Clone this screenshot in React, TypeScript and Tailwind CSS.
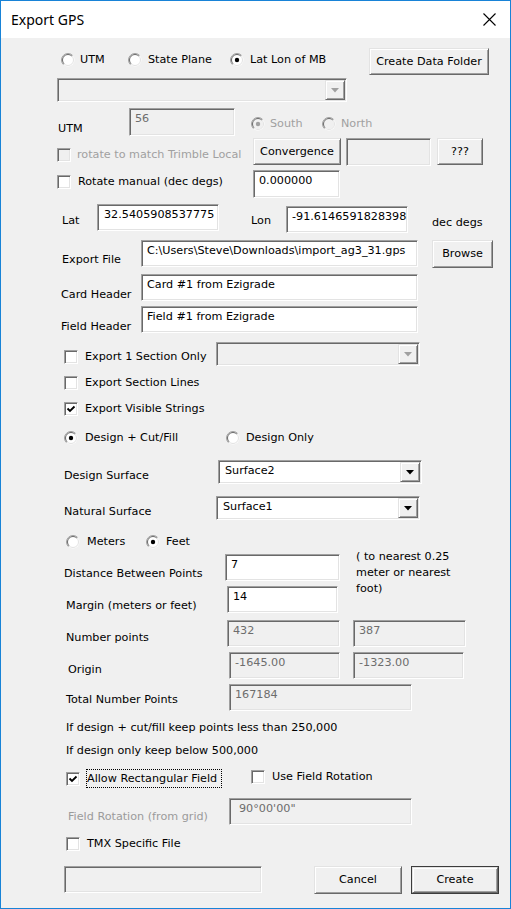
import React from "react";

function Radio({ checked = false, disabled = false }: { checked?: boolean; disabled?: boolean }) {
  return (
    <svg width="14" height="14" viewBox="0 0 14 14" className="shrink-0">
      <circle cx="7" cy="7" r="6.5" fill="#ffffff" />
      <path d="M2.4 11.6 A6.5 6.5 0 0 1 11.6 2.4" stroke="#a0a0a0" strokeWidth="1" fill="none" />
      <circle cx="7" cy="7" r="5" fill={disabled ? "#f0f0f0" : "#ffffff"} />
      <path d="M3.1 10.9 A5.5 5.5 0 0 1 10.9 3.1" stroke="#696969" strokeWidth="1" fill="none" />
      <path d="M3.1 10.9 A5.5 5.5 0 0 0 10.9 3.1" stroke="#e3e3e3" strokeWidth="1" fill="none" />
      {checked && <circle cx="7" cy="7" r="2.2" fill={disabled ? "#a0a0a0" : "#000000"} />}
    </svg>
  );
}

function CheckBox({ checked = false, disabled = false }: { checked?: boolean; disabled?: boolean }) {
  return (
    <div
      className={`w-[14px] h-[14px] shrink-0 border border-t-[#a0a0a0] border-l-[#a0a0a0] border-b-white border-r-white shadow-[inset_1px_1px_0_#696969,inset_-1px_-1px_0_#e3e3e3] flex items-center justify-center ${
        disabled ? "bg-[#f0f0f0]" : "bg-white"
      }`}
    >
      {checked && (
        <svg width="10" height="10" viewBox="0 0 10 10">
          <path d="M1.5 4.5 L4 7 L8.5 2.5" stroke="#000" strokeWidth="1.8" fill="none" />
        </svg>
      )}
    </div>
  );
}

function TextBox({
  className = "",
  value = "",
  disabled = false,
}: {
  className?: string;
  value?: string;
  disabled?: boolean;
}) {
  return (
    <div
      className={`h-[27px] shrink-0 border border-t-[#a0a0a0] border-l-[#a0a0a0] border-b-white border-r-white shadow-[inset_1px_1px_0_#696969,inset_-1px_-1px_0_#e3e3e3] pt-[3px] leading-[14px] whitespace-nowrap overflow-hidden ${
        disabled ? "bg-[#f0f0f0] text-[#6d6d6d]" : "bg-white text-black"
      } ${className}`}
    >
      {value}
    </div>
  );
}

function Btn({ className = "", children }: { className?: string; children: React.ReactNode }) {
  return (
    <div
      className={`h-[27px] shrink-0 bg-[#f0f0f0] border border-t-[#e3e3e3] border-l-[#e3e3e3] border-b-[#696969] border-r-[#696969] shadow-[inset_1px_1px_0_#ffffff,inset_-1px_-1px_0_#a0a0a0] flex items-center justify-center leading-[14px] whitespace-nowrap ${className}`}
    >
      {children}
    </div>
  );
}

function Combo({
  className = "",
  value = "",
  disabled = false,
}: {
  className?: string;
  value?: string;
  disabled?: boolean;
}) {
  return (
    <div
      className={`h-[24px] shrink-0 flex border border-t-[#a0a0a0] border-l-[#a0a0a0] border-b-white border-r-white shadow-[inset_1px_1px_0_#696969,inset_-1px_-1px_0_#e3e3e3] p-[1px] ${
        disabled ? "bg-[#f0f0f0]" : "bg-white"
      } ${className}`}
    >
      <div className="flex-1 pl-[5px] pt-[2px] leading-[14px] whitespace-nowrap overflow-hidden">{value}</div>
      <div className="w-[20px] h-full bg-[#f0f0f0] border border-t-[#e3e3e3] border-l-[#e3e3e3] border-b-[#696969] border-r-[#696969] shadow-[inset_1px_1px_0_#ffffff,inset_-1px_-1px_0_#a0a0a0] flex items-center justify-center">
        <svg width="8" height="5" viewBox="0 0 8 5">
          <path d="M0 0 L8 0 L4 4.5 Z" fill={disabled ? "#a0a0a0" : "#000"} />
        </svg>
      </div>
    </div>
  );
}

export default function App() {
  return (
    <div className="w-[511px] h-[909px] overflow-hidden border border-[#1883d7] bg-[#f0f0f0] text-black font-['DejaVu_Sans',sans-serif] text-[11.2px]">
      {/* Title bar */}
      <div className="h-[37px] bg-white flex items-center justify-between pl-[10px] pr-[14px]">
        <span className="font-['Noto_Sans',sans-serif] text-[14px] leading-[18px] text-black">Export GPS</span>
        <svg width="13" height="13" viewBox="0 0 13 13">
          <path d="M0.5 0.5 L12.5 12.5 M12.5 0.5 L0.5 12.5" stroke="#000" strokeWidth="1.1" />
        </svg>
      </div>

      {/* Row A: coordinate system radios */}
      <div className="flex items-start h-[28px] mt-[10px]">
        <div className="flex items-center w-[67px] h-[14px] mt-[5px] ml-[60px]">
          <Radio />
          <span className="ml-[5px] leading-[14px]">UTM</span>
        </div>
        <div className="flex items-center w-[102px] h-[14px] mt-[5px]">
          <Radio />
          <span className="ml-[6px] leading-[14px]">State Plane</span>
        </div>
        <div className="flex items-center w-[139px] h-[14px] mt-[5px]">
          <Radio checked />
          <span className="ml-[6px] leading-[14px]">Lat Lon of MB</span>
        </div>
        <Btn className="w-[120px]">Create Data Folder</Btn>
      </div>

      {/* Row B: disabled combo */}
      <div className="flex items-start h-[23px] mt-[2px]">
        <Combo className="ml-[56px] w-[290px] h-[23px]" disabled />
      </div>

      {/* Row C: UTM zone */}
      <div className="flex items-start h-[28px] mt-[7px]">
        <span className="ml-[57px] w-[71px] mt-[14px] leading-[14px]">UTM</span>
        <TextBox className="w-[106px] h-[28px] pl-[5px]" value="56" disabled />
        <div className="flex items-center w-[71px] h-[14px] mt-[9px] ml-[16px] text-[#a0a0a0]">
          <Radio checked disabled />
          <span className="ml-[5px] leading-[14px]">South</span>
        </div>
        <div className="flex items-center w-[80px] h-[14px] mt-[9px] text-[#a0a0a0]">
          <Radio disabled />
          <span className="ml-[5px] leading-[14px]">North</span>
        </div>
      </div>

      {/* Row D: rotate trimble */}
      <div className="flex items-start h-[28px] mt-[2px]">
        <div className="flex items-center w-[196px] h-[14px] mt-[10px] ml-[56px] text-[#a0a0a0]">
          <CheckBox disabled />
          <span className="ml-[6px] leading-[14px] whitespace-nowrap">rotate to match Trimble Local</span>
        </div>
        <Btn className="w-[88px]">Convergence</Btn>
        <TextBox className="w-[85px] h-[28px] ml-[5px]" disabled />
        <Btn className="w-[46px] ml-[6px]">???</Btn>
      </div>

      {/* Row E: rotate manual */}
      <div className="flex items-start h-[28px] mt-[4px]">
        <div className="flex items-center w-[196px] h-[14px] mt-[5px] ml-[56px]">
          <CheckBox />
          <span className="ml-[7px] leading-[14px] whitespace-nowrap">Rotate manual (dec degs)</span>
        </div>
        <TextBox className="w-[87px] h-[28px] pl-[5px]" value="0.000000" />
      </div>

      {/* Row F: lat lon */}
      <div className="flex items-start h-[29px] mt-[6px]">
        <span className="ml-[61px] w-[35px] mt-[10px] leading-[14px]">Lat</span>
        <TextBox className="w-[122px] pl-[6px]" value="32.5405908537775" />
        <span className="ml-[32px] w-[35px] mt-[10px] leading-[14px]">Lon</span>
        <TextBox className="w-[122px] mt-[2px] pl-[5px]" value="-91.6146591828398" />
        <span className="ml-[24px] mt-[12px] leading-[14px] whitespace-nowrap">dec degs</span>
      </div>

      {/* Row G: export file */}
      <div className="flex items-start h-[28px] mt-[7px]">
        <span className="ml-[61px] w-[79px] mt-[13px] leading-[14px] whitespace-nowrap">Export File</span>
        <TextBox className="w-[277px] pl-[5px]" value="C:\Users\Steve\Downloads\import_ag3_31.gps" />
        <Btn className="w-[61px] h-[28px] ml-[14px]">Browse</Btn>
      </div>

      {/* Row H: card header */}
      <div className="flex items-start h-[27px] mt-[6px]">
        <span className="ml-[60px] w-[80px] mt-[14px] leading-[14px] whitespace-nowrap">Card Header</span>
        <TextBox className="w-[277px] pl-[5px]" value="Card #1 from Ezigrade" />
      </div>

      {/* Row I: field header */}
      <div className="flex items-start h-[27px] mt-[5px]">
        <span className="ml-[60px] w-[80px] mt-[14px] leading-[14px] whitespace-nowrap">Field Header</span>
        <TextBox className="w-[277px] pl-[5px]" value="Field #1 from Ezigrade" />
      </div>

      {/* Row J: export 1 section */}
      <div className="flex items-start h-[24px] mt-[9px]">
        <div className="flex items-center w-[152px] h-[14px] mt-[8px] ml-[63px]">
          <CheckBox />
          <span className="ml-[7px] leading-[14px] whitespace-nowrap">Export 1 Section Only</span>
        </div>
        <Combo className="w-[204px]" disabled />
      </div>

      {/* Row K */}
      <div className="flex items-start h-[14px] mt-[10px]">
        <div className="flex items-center h-[14px] ml-[63px]">
          <CheckBox />
          <span className="ml-[7px] leading-[14px] whitespace-nowrap">Export Section Lines</span>
        </div>
      </div>

      {/* Row L */}
      <div className="flex items-start h-[14px] mt-[12px]">
        <div className="flex items-center h-[14px] ml-[63px]">
          <CheckBox checked />
          <span className="ml-[7px] leading-[14px] whitespace-nowrap">Export Visible Strings</span>
        </div>
      </div>

      {/* Row M: design radios */}
      <div className="flex items-start h-[14px] mt-[15px]">
        <div className="flex items-center w-[162px] h-[14px] ml-[63px]">
          <Radio checked />
          <span className="ml-[7px] leading-[14px] whitespace-nowrap">Design + Cut/Fill</span>
        </div>
        <div className="flex items-center h-[14px]">
          <Radio />
          <span className="ml-[6px] leading-[14px] whitespace-nowrap">Design Only</span>
        </div>
      </div>

      {/* Row N: design surface */}
      <div className="flex items-start h-[24px] mt-[15px]">
        <span className="ml-[63px] w-[154px] mt-[9px] leading-[14px] whitespace-nowrap">Design Surface</span>
        <Combo className="w-[204px]" value="Surface2" />
      </div>

      {/* Row O: natural surface */}
      <div className="flex items-start h-[24px] mt-[12px]">
        <span className="ml-[63px] w-[152px] mt-[9px] leading-[14px] whitespace-nowrap">Natural Surface</span>
        <Combo className="w-[204px]" value="Surface1" />
      </div>

      {/* Row P: units */}
      <div className="flex items-start h-[14px] mt-[15px]">
        <div className="flex items-center w-[80px] h-[14px] ml-[65px]">
          <Radio />
          <span className="ml-[7px] leading-[14px]">Meters</span>
        </div>
        <div className="flex items-center h-[14px]">
          <Radio checked />
          <span className="ml-[6px] leading-[14px]">Feet</span>
        </div>
      </div>

      {/* Block Q/R: distance + margin with note */}
      <div className="flex items-start mt-[5px]">
        <div className="w-[339px] flex flex-col">
          <div className="flex items-start h-[27px]">
            <span className="ml-[63px] w-[161px] mt-[13px] leading-[14px] whitespace-nowrap">Distance Between Points</span>
            <TextBox className="w-[115px] pl-[5px]" value="7" />
          </div>
          <div className="flex items-start h-[27px] mt-[5px]">
            <span className="ml-[65px] w-[161px] mt-[13px] leading-[14px] whitespace-nowrap">Margin (meters or feet)</span>
            <TextBox className="w-[111px] pl-[5px]" value="14" />
          </div>
        </div>
        <div className="ml-[16px] -mt-[5px] leading-[16px] whitespace-nowrap">
          ( to nearest 0.25
          <br />
          meter or nearest
          <br />
          foot)
        </div>
      </div>

      {/* Row S: number points */}
      <div className="flex items-start h-[27px] mt-[7px]">
        <span className="ml-[65px] w-[161px] mt-[11px] leading-[14px] whitespace-nowrap">Number points</span>
        <TextBox className="w-[113px] pl-[5px]" value="432" disabled />
        <TextBox className="w-[113px] ml-[13px] pl-[5px]" value="387" disabled />
      </div>

      {/* Row T: origin */}
      <div className="flex items-start h-[27px] mt-[5px]">
        <span className="ml-[67px] w-[161px] mt-[11px] leading-[14px] whitespace-nowrap">Origin</span>
        <TextBox className="w-[111px] pl-[5px]" value="-1645.00" disabled />
        <TextBox className="w-[111px] ml-[13px] pl-[5px]" value="-1323.00" disabled />
      </div>

      {/* Row U: total */}
      <div className="flex items-start h-[27px] mt-[5px]">
        <span className="ml-[65px] w-[163px] mt-[9px] leading-[14px] whitespace-nowrap">Total Number Points</span>
        <TextBox className="w-[183px] pl-[5px]" value="167184" disabled />
      </div>

      {/* Notes */}
      <div className="ml-[65px] mt-[10px] leading-[14px] whitespace-nowrap">
        If design + cut/fill keep points less than 250,000
      </div>
      <div className="ml-[65px] mt-[9px] leading-[14px] whitespace-nowrap">If design only keep below 500,000</div>

      {/* Row X: rectangular field */}
      <div className="flex items-start h-[19px] mt-[11px]">
        <div className="ml-[65px] mt-[3px]">
          <CheckBox checked />
        </div>
        <div className="ml-[6px] w-[136px] h-[19px] border border-dotted border-black leading-[16px] whitespace-nowrap pt-[1px]">
          Allow Rectangular Field
        </div>
        <div className="flex items-center h-[14px] ml-[29px] mt-[1px]">
          <CheckBox />
          <span className="ml-[7px] leading-[14px] whitespace-nowrap">Use Field Rotation</span>
        </div>
      </div>

      {/* Row Y: field rotation */}
      <div className="flex items-start h-[27px] mt-[10px]">
        <span className="ml-[67px] w-[161px] mt-[12px] leading-[14px] whitespace-nowrap text-[#9b9b9b]">
          Field Rotation (from grid)
        </span>
        <TextBox className="w-[183px] pl-[9px]" value={"90\u00B000'00\""} disabled />
      </div>

      {/* Row Z: TMX */}
      <div className="flex items-start h-[14px] mt-[12px]">
        <div className="flex items-center h-[14px] ml-[65px]">
          <CheckBox />
          <span className="ml-[7px] leading-[14px] whitespace-nowrap">TMX Specific File</span>
        </div>
      </div>

      {/* Row AA: bottom */}
      <div className="flex items-start h-[28px] mt-[15px]">
        <TextBox className="ml-[63px] w-[198px]" disabled />
        <Btn className="w-[88px] h-[28px] ml-[52px]">Cancel</Btn>
        <div className="ml-[9px] w-[88px] h-[28px] border border-[#3c3c3c]">
          <Btn className="w-full h-full">Create</Btn>
        </div>
      </div>
    </div>
  );
}
